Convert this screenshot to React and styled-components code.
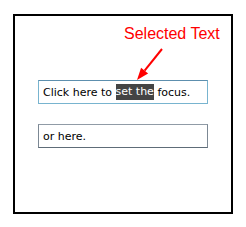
import React from "react";
import styled, { createGlobalStyle } from "styled-components";

const GlobalStyle = createGlobalStyle`
  html, body {
    margin: 0;
    padding: 0;
    background: #fff;
  }
`;

const Frame = styled.div`
  position: relative;
  box-sizing: border-box;
  width: 220px;
  height: 200px;
  margin: 14px 0 0 13px;
  border: 2px solid #000;
  padding: 64px 0 0 23px;
  display: flex;
  flex-direction: column;
  gap: 20px;
`;

const TextBox = styled.div`
  box-sizing: border-box;
  width: 170px;
  height: 24px;
  padding: 0 4px;
  display: flex;
  align-items: center;
  font-family: "DejaVu Sans", Verdana, sans-serif;
  font-size: 11px;
  color: #000;
  white-space: pre;
  background: #fff;
  border: 1px solid;
  border-color: ${(p) =>
    p.$focused
      ? "#5d8fae #78b4cf #78b4cf #78b4cf"
      : "#909ba6 #7c8894 #5e6c78 #7c8894"};
`;

const Selection = styled.span`
  background: #444;
  color: #fff;
  line-height: 16px;
`;

const Callout = styled.div`
  position: absolute;
  left: 109px;
  top: 9px;
  font-family: "Liberation Sans", Arial, sans-serif;
  font-size: 16px;
  color: #f00;
  white-space: nowrap;
`;

const Arrow = styled.svg`
  position: absolute;
  left: 0;
  top: 0;
  overflow: visible;
`;

export default function App() {
  return (
    <>
      <GlobalStyle />
      <Frame>
        <Callout>Selected Text</Callout>
        <Arrow width="216" height="196">
          <line x1="147" y1="33" x2="129.6" y2="54.6" stroke="#f00" strokeWidth="2" />
          <polygon points="122,64 126.1,51.8 133.1,57.4" fill="#f00" />
        </Arrow>
        <TextBox $focused>
          Click here to <Selection>set the</Selection> focus.
        </TextBox>
        <TextBox>or here.</TextBox>
      </Frame>
    </>
  );
}
